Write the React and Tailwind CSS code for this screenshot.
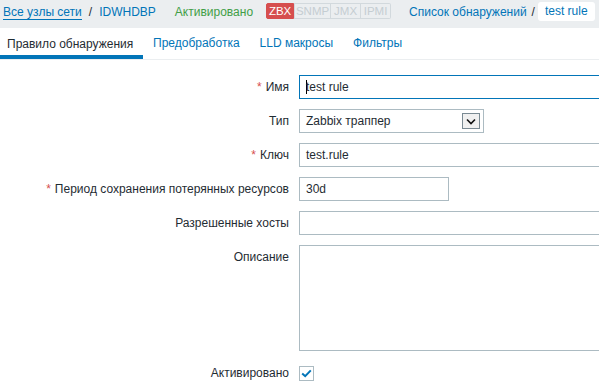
import React from 'react';

const FONT = { fontFamily: '"Liberation Sans", Arial, sans-serif' };

function Req() {
  return <span className="text-[#d64e4e] mr-[4px]">*</span>;
}

function Label({ children, required, top }) {
  return (
    <div className={`text-right text-[12px] text-[#1f2c33] ${top ? 'pt-[4px] leading-[16px]' : 'h-[24px] leading-[24px]'}`}>
      {required && <Req />}
      {children}
    </div>
  );
}

function TextInput({ value, width, focused, caret }) {
  return (
    <div
      className={`h-[24px] border bg-white flex items-center pl-[6px] text-[12px] text-[#1f2c33] ${
        focused ? 'border-[#0275b8]' : 'border-[#acbbc2]'
      } ${width || 'w-[453px]'}`}
    >
      {caret && <span className="inline-block w-px h-[14px] bg-black -mr-px" />}
      {value}
    </div>
  );
}

export default function App() {
  return (
    <div className="w-[599px] h-[387px] overflow-hidden bg-white" style={FONT}>
      {/* breadcrumb bar */}
      <div className="h-[28px] bg-[#ebeef0] flex items-start pt-[3px] pl-[3px] text-[12px] whitespace-nowrap">
        <span className="text-[#0275b8] leading-[14px] border-b border-[#0275b8] mt-[2px]">Все узлы сети</span>
        <span className="text-[#1f2c33] mx-[7px] mt-[2px] leading-[14px]">/</span>
        <span className="text-[#0275b8] mt-[2px] leading-[14px]">IDWHDBP</span>
        <span className="text-[#429e47] ml-[19px] mt-[2px] leading-[14px]">Активировано</span>
        <div className="flex ml-[13px] text-[11.5px] leading-[14px] text-center">
          <span className="w-[28px] bg-[#d64e4e] text-white border border-[#d64e4e] rounded-l-[2px]">ZBX</span>
          <span className="w-[37px] text-[#c5cdd2] border border-[#d2d9dd]">SNMP</span>
          <span className="w-[30px] text-[#c5cdd2] border border-l-0 border-[#d2d9dd]">JMX</span>
          <span className="w-[30px] text-[#c5cdd2] border border-l-0 border-[#d2d9dd] rounded-r-[2px]">IPMI</span>
        </div>
        <span className="text-[#0275b8] ml-[18px] mt-[2px] leading-[14px]">Список обнаружений</span>
        <span className="text-[#1f2c33] ml-[5px] mt-[2px] leading-[14px]">/</span>
        <span className="bg-white text-[#0275b8] ml-[3px] -mt-[1px] px-[7px] h-[19px] leading-[19px] rounded-[3px]">test rule</span>
      </div>

      {/* tabs */}
      <div className="flex h-[32px] border-b border-[#ebeef0] text-[12px] whitespace-nowrap">
        <div className="w-[143px] pl-[7px] border-b-[4px] border-[#0275b8] text-[#1f2c33] leading-[28px] pt-[2px]">
          Правило обнаружения
        </div>
        <div className="px-[10px] text-[#0275b8] leading-[30px]">Предобработка</div>
        <div className="px-[10px] text-[#0275b8] leading-[30px]">LLD макросы</div>
        <div className="px-[10px] text-[#0275b8] leading-[30px]">Фильтры</div>
      </div>

      {/* form */}
      <div className="grid grid-cols-[289px_453px] gap-x-[10px] gap-y-[10px] pt-[15px]">
        <Label required>Имя</Label>
        <TextInput value="test rule" focused caret />

        <Label>Тип</Label>
        <div className="w-[185px] h-[24px] border border-[#acbbc2] bg-white flex items-center justify-between pl-[6px] pr-[3px] text-[12px] text-[#1f2c33]">
          <span>Zabbix траппер</span>
          <span className="w-[18px] h-[16px] border border-[#7a8a93] bg-[#f0f0f0] flex items-center justify-center">
            <svg width="10" height="7" viewBox="0 0 10 7">
              <path d="M1 1.5 L5 5.5 L9 1.5" stroke="#111" strokeWidth="1.6" fill="none" />
            </svg>
          </span>
        </div>

        <Label required>Ключ</Label>
        <TextInput value="test.rule" />

        <Label required>Период сохранения потерянных ресурсов</Label>
        <TextInput value="30d" width="w-[150px]" />

        <Label>Разрешенные хосты</Label>
        <TextInput value="" />

        <Label top>Описание</Label>
        <div className="h-[106px] w-[453px] border border-[#acbbc2] bg-white" />

        <Label>Активировано</Label>
        <div className="h-[24px] flex items-center">
          <span className="w-[15px] h-[15px] border border-[#acbbc2] bg-white flex items-center justify-center">
            <svg width="11" height="9" viewBox="0 0 11 9">
              <path d="M1.2 4.4 L4.2 7.2 L9.8 1.4" stroke="#0275b8" strokeWidth="2" fill="none" />
            </svg>
          </span>
        </div>
      </div>
    </div>
  );
}
